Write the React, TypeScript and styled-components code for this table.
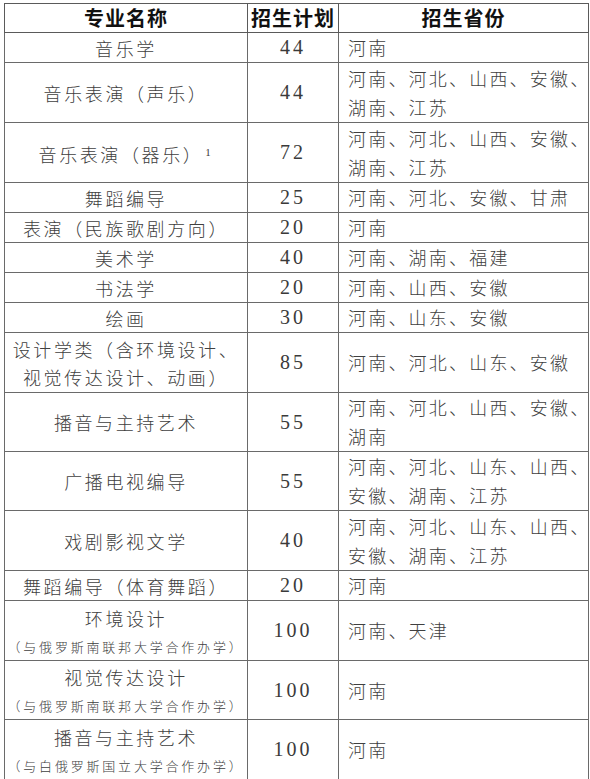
import React from "react";
import styled, { createGlobalStyle } from "styled-components";

const GlobalStyle = createGlobalStyle`
  html, body {
    margin: 0;
    padding: 0;
    background: #fff;
  }
  body {
    font-family: "Noto Sans CJK SC", "Noto Sans", sans-serif;
  }
`;

const Page = styled.div`
  padding: 3px 0 0 4px;
`;

const Table = styled.table`
  border-collapse: collapse;
  table-layout: fixed;
  width: 584px;
  border: 1px solid #5a5a5a;
`;

const Col = styled.col<{ $w: number }>`
  width: ${(p) => p.$w}px;
`;

const Row = styled.tr<{ $h: number }>`
  height: ${(p) => p.$h}px;
`;

const HeadCell = styled.th`
  border: 1px solid #5a5a5a;
  padding: 0;
  font-family: "Noto Sans CJK SC", sans-serif;
  font-weight: 700;
  font-size: 20px;
  line-height: 26px;
  letter-spacing: 1px;
  color: #111;
  text-align: center;
  vertical-align: middle;
`;

const Cell = styled.td`
  border: 1px solid #6a6a6a;
  padding: 0;
  vertical-align: middle;
  white-space: nowrap;
`;

const NameCell = styled(Cell)`
  text-align: center;
  font-size: 18px;
  font-weight: 300;
  line-height: 28px;
  letter-spacing: 2.6px;
  color: #404040;
`;

const PlanCell = styled(Cell)`
  text-align: center;
  font-family: "Liberation Serif", "Times New Roman", serif;
  font-size: 20px;
  letter-spacing: 3px;
  color: #3a3a3a;
`;

const ProvinceCell = styled(Cell)`
  text-align: left;
  padding-left: 9px;
  font-size: 18px;
  font-weight: 300;
  line-height: 29px;
  letter-spacing: 2.2px;
  color: #404040;
`;

const Note = styled.div`
  font-size: 13px;
  line-height: 22px;
  letter-spacing: 2.8px;
  margin-top: 4px;
`;

const Mark = styled.sup`
  font-family: "Liberation Serif", serif;
  font-size: 11px;
  vertical-align: 6px;
  margin-left: 2px;
`;

type Item = {
  name: React.ReactNode;
  plan: string;
  provinces: string[];
  h: number;
};

const items: Item[] = [
  { name: "音乐学", plan: "44", provinces: ["河南"], h: 30 },
  { name: "音乐表演（声乐）", plan: "44", provinces: ["河南、河北、山西、安徽、", "湖南、江苏"], h: 60 },
  {
    name: (
      <>
        音乐表演（器乐）<Mark>1</Mark>
      </>
    ),
    plan: "72",
    provinces: ["河南、河北、山西、安徽、", "湖南、江苏"],
    h: 60,
  },
  { name: "舞蹈编导", plan: "25", provinces: ["河南、河北、安徽、甘肃"], h: 30 },
  { name: "表演（民族歌剧方向）", plan: "20", provinces: ["河南"], h: 30 },
  { name: "美术学", plan: "40", provinces: ["河南、湖南、福建"], h: 30 },
  { name: "书法学", plan: "20", provinces: ["河南、山西、安徽"], h: 30 },
  { name: "绘画", plan: "30", provinces: ["河南、山东、安徽"], h: 29 },
  {
    name: (
      <>
        设计学类（含环境设计、
        <br />
        视觉传达设计、动画）
      </>
    ),
    plan: "85",
    provinces: ["河南、河北、山东、安徽"],
    h: 60,
  },
  { name: "播音与主持艺术", plan: "55", provinces: ["河南、河北、山西、安徽、", "湖南"], h: 59 },
  { name: "广播电视编导", plan: "55", provinces: ["河南、河北、山东、山西、", "安徽、湖南、江苏"], h: 58 },
  { name: "戏剧影视文学", plan: "40", provinces: ["河南、河北、山东、山西、", "安徽、湖南、江苏"], h: 60 },
  { name: "舞蹈编导（体育舞蹈）", plan: "20", provinces: ["河南"], h: 30 },
  {
    name: (
      <>
        环境设计<Note>（与俄罗斯南联邦大学合作办学）</Note>
      </>
    ),
    plan: "100",
    provinces: ["河南、天津"],
    h: 60,
  },
  {
    name: (
      <>
        视觉传达设计<Note>（与俄罗斯南联邦大学合作办学）</Note>
      </>
    ),
    plan: "100",
    provinces: ["河南"],
    h: 59,
  },
  {
    name: (
      <>
        播音与主持艺术<Note>（与白俄罗斯国立大学合作办学）</Note>
      </>
    ),
    plan: "100",
    provinces: ["河南"],
    h: 60,
  },
];

const App = () => (
  <>
    <GlobalStyle />
    <Page>
      <Table>
        <colgroup>
          <Col $w={243} />
          <Col $w={91} />
          <Col $w={250} />
        </colgroup>
        <thead>
          <Row $h={29}>
            <HeadCell>专业名称</HeadCell>
            <HeadCell>招生计划</HeadCell>
            <HeadCell>招生省份</HeadCell>
          </Row>
        </thead>
        <tbody>
          {items.map((item, i) => (
            <Row key={i} $h={item.h}>
              <NameCell>{item.name}</NameCell>
              <PlanCell>{item.plan}</PlanCell>
              <ProvinceCell>
                {item.provinces.map((line, j) => (
                  <div key={j}>{line}</div>
                ))}
              </ProvinceCell>
            </Row>
          ))}
        </tbody>
      </Table>
    </Page>
  </>
);

export default App;
